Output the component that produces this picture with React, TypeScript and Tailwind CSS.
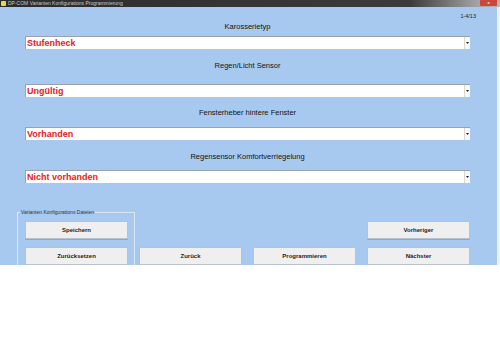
const fields = [
  { label: "Karosserietyp", value: "Stufenheck", labelGap: "mt-[2px]", boxGap: "mt-[4px]" },
  { label: "Regen/Licht Sensor", value: "Ungültig", labelGap: "mt-[12px]", boxGap: "mt-[13px]" },
  { label: "Fensterheber hintere Fenster", value: "Vorhanden", labelGap: "mt-[11px]", boxGap: "mt-[9px]" },
  { label: "Regensensor Komfortverriegelung", value: "Nicht vorhanden", labelGap: "mt-[12px]", boxGap: "mt-[8px]" },
];

function Button({ label }: { label: string }) {
  return (
    <button className="h-[18px] w-[103px] border border-[#b9c2cc] bg-[#efefef] text-[6px] font-bold leading-none text-[#1e1e1e] shadow-[0_1px_0_#8ea9c9]">
      {label}
    </button>
  );
}

function Select({ value }: { value: string }) {
  return (
    <div className="flex h-[13px] w-[445px] border-t border-l border-[#9aa3ad] bg-white">
      <div className="flex flex-1 items-center pl-[1px] text-[9px] font-bold leading-none text-[#e32222]">
        {value}
      </div>
      <div className="flex w-[6px] items-center justify-center border-l border-[#d6d6d6] bg-[#f7f7f7]">
        <svg width="3" height="2" viewBox="0 0 3 2">
          <path d="M0 0h3L1.5 2z" fill="#222" />
        </svg>
      </div>
    </div>
  );
}

export default function App() {
  return (
    <div
      className="h-[351px] w-[500px] overflow-hidden bg-white"
      style={{ fontFamily: '"Liberation Sans", Arial, sans-serif' }}
    >
      <div className="flex h-[7px] items-center bg-[linear-gradient(to_right,#2c2c2c_0%,#3b3b3b_82%,#a0a0a0_95%,#b8b8b8_100%)]">
        <div className="ml-[1px] h-[5px] w-[5px] rounded-[1px] bg-[#e8d84a]" />
        <span className="ml-[2px] text-[5px] leading-none text-[#c9c9c9]">
          DP-COM Varianten Konfigurations Programmierung
        </span>
        <div className="ml-auto mr-[3px] flex h-[6px] w-[17px] items-center justify-center self-start rounded-b-[1px] bg-[#c9483a]">
          <span className="text-[4px] font-bold leading-none text-white">x</span>
        </div>
      </div>

      <div className="flex">
        <div className="h-[258px] w-[497px] overflow-hidden bg-[#a7c8ef]">
          <div className="mt-[5px] h-[8px] pr-[21px] text-right text-[5.5px] leading-[8px] text-[#222]">
            1-4/13
          </div>

          <div className="flex flex-col pl-[25px]">
            {fields.map((f) => (
              <div key={f.label} className="flex flex-col">
                <div
                  className={`${f.labelGap} h-[10px] w-[445px] text-center text-[7.5px] leading-[10px] text-[#141414]`}
                >
                  {f.label}
                </div>
                <div className={f.boxGap}>
                  <Select value={f.value} />
                </div>
              </div>
            ))}
          </div>

          <div className="mt-[26px] flex items-start">
            <fieldset className="ml-[17px] h-[80px] w-[118px] border border-[#dce6f2] pl-[7px] pt-[5px]">
              <legend className="-ml-[5px] px-[1px] text-[5px] leading-[7px] text-[#333]">
                Varianten Konfigurations Dateien
              </legend>
              <div className="flex flex-col gap-[8px]">
                <Button label="Speichern" />
                <Button label="Zurücksetzen" />
              </div>
            </fieldset>
            <div className="ml-[4px] mt-[12px] grid grid-cols-[103px_103px_103px] gap-x-[11px] gap-y-[8px]">
              <div />
              <div />
              <Button label="Vorheriger" />
              <Button label="Zurück" />
              <Button label="Programmieren" />
              <Button label="Nächster" />
            </div>
          </div>
        </div>
        <div className="h-[258px] w-[3px] bg-[#eef2f6]" />
      </div>
    </div>
  );
}
